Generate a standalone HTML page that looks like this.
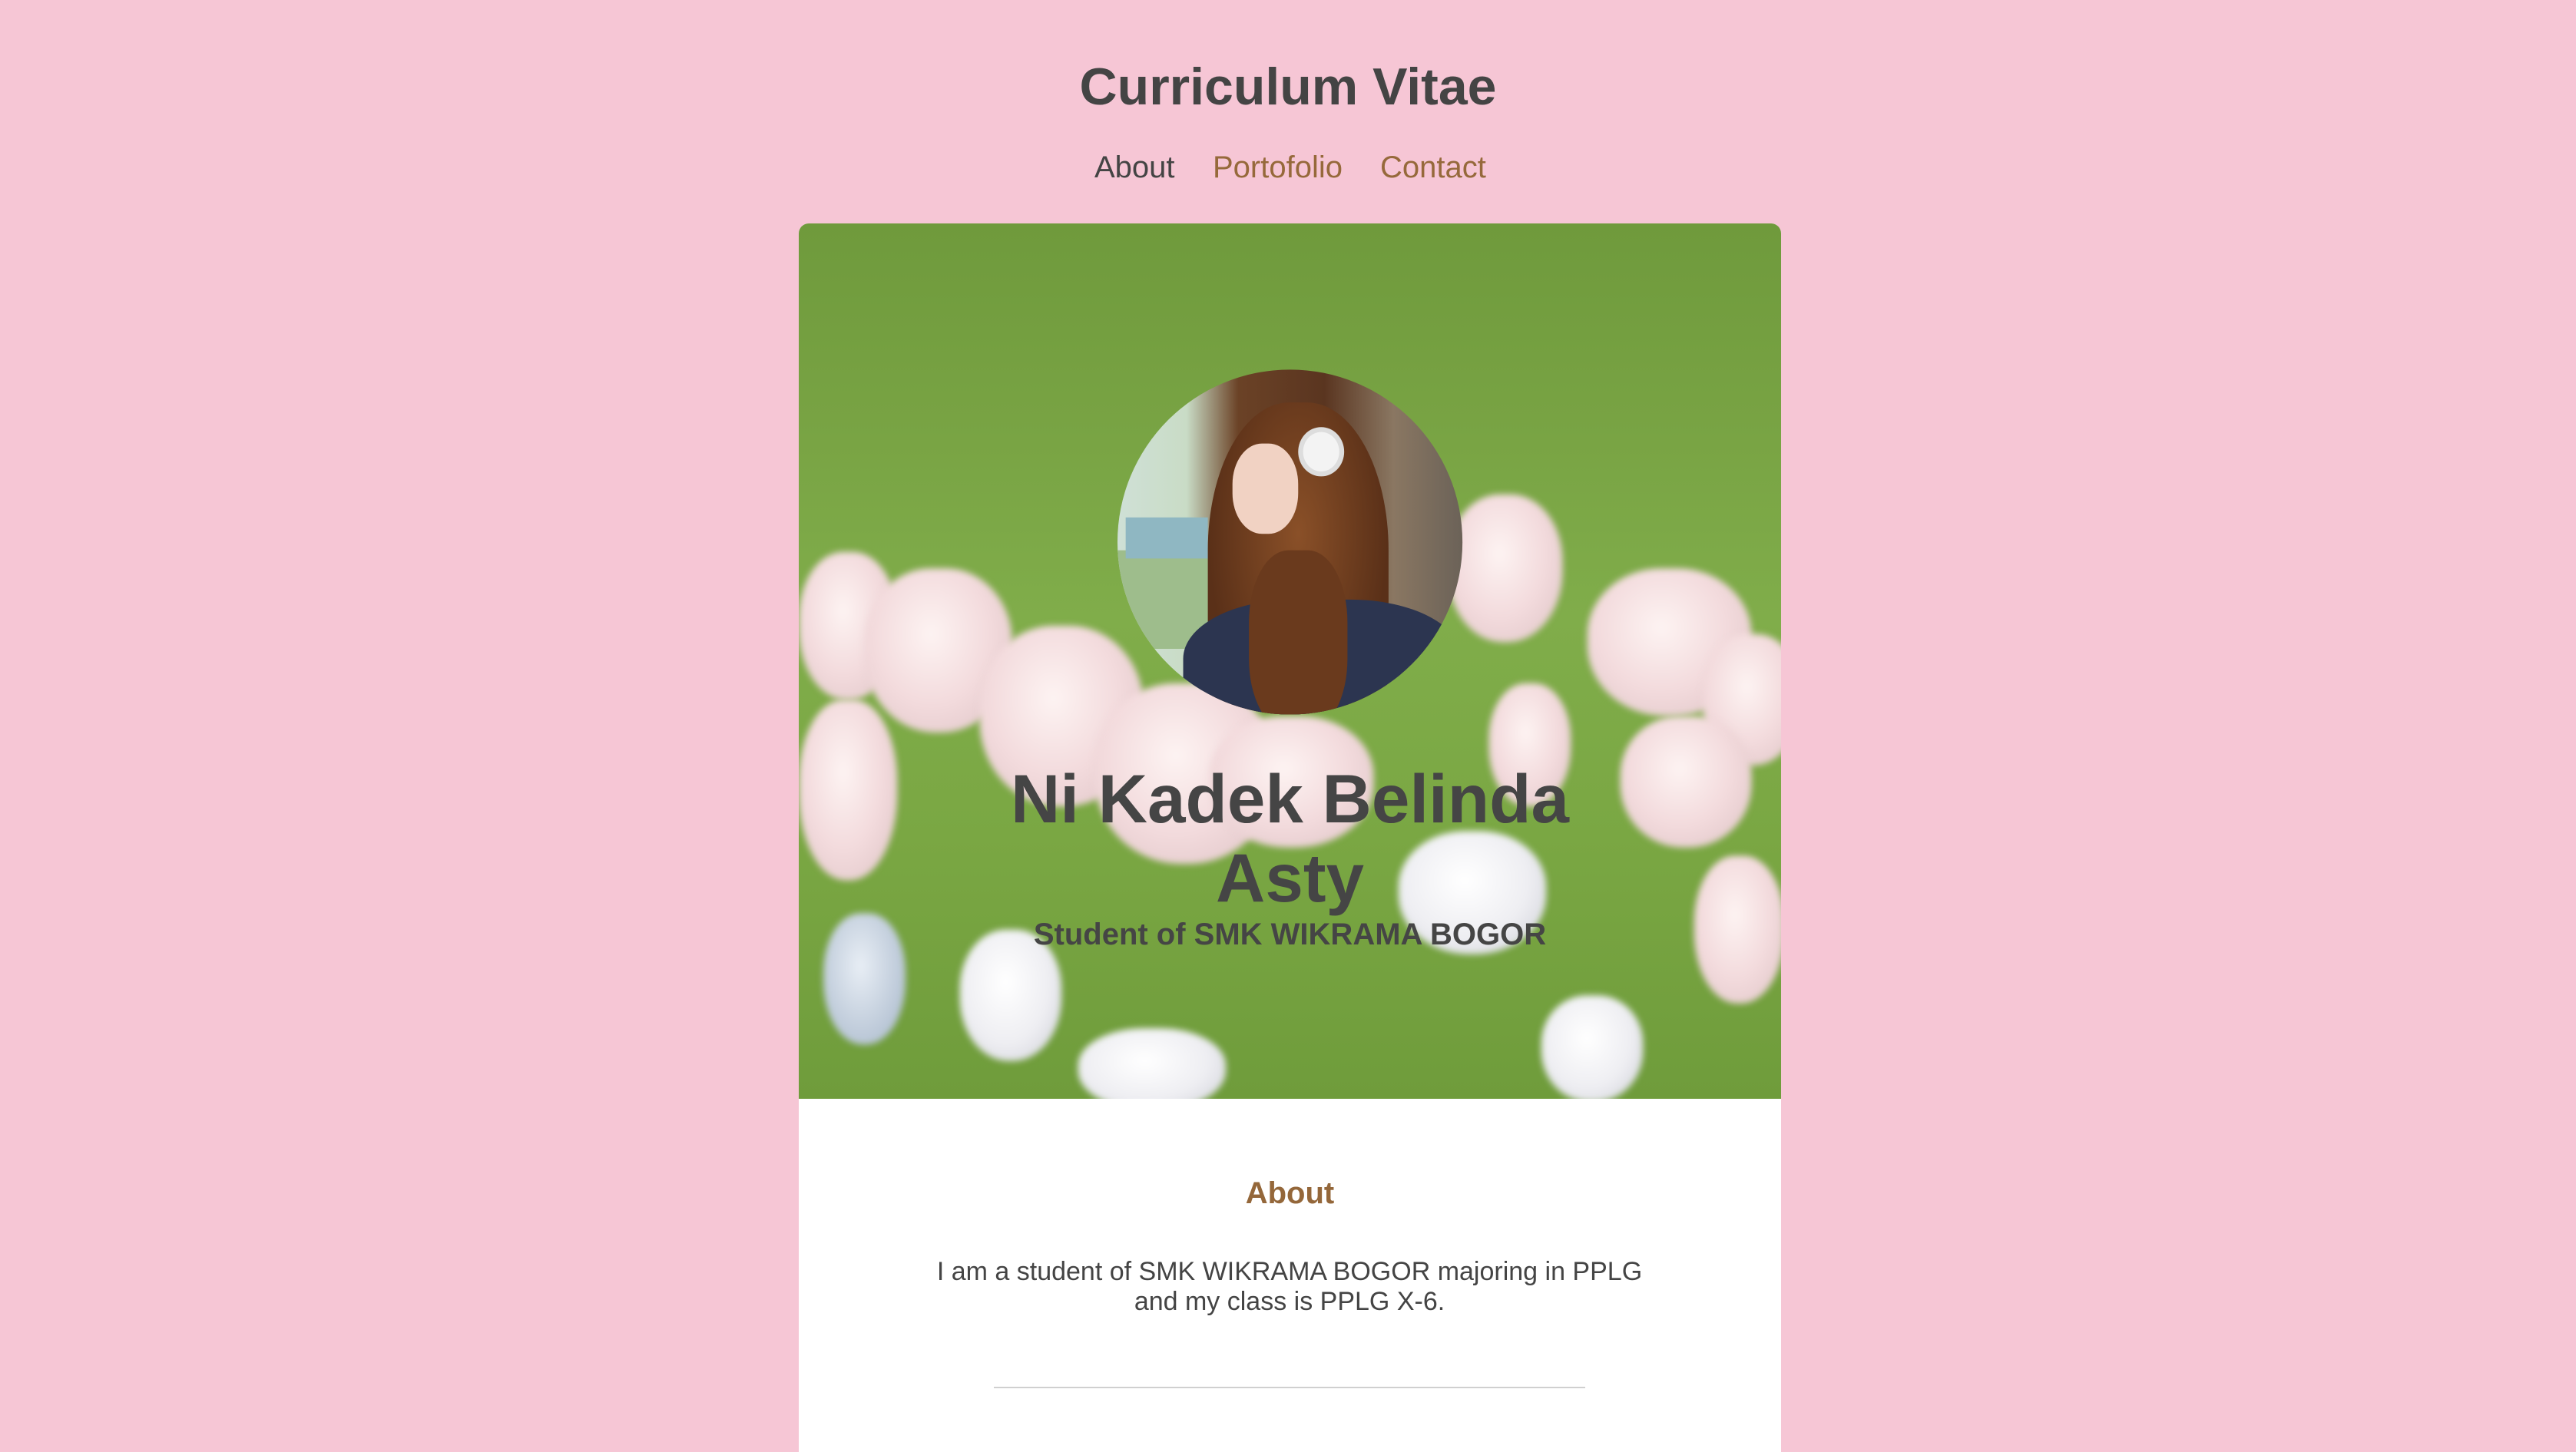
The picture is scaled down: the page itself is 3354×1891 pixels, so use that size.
<!DOCTYPE html>
<html><head><meta charset="utf-8"><style>
*{margin:0;padding:0;box-sizing:border-box}
body{width:3354px;height:1872px;background:#f6c6d5;font-family:"Liberation Sans",Arial,sans-serif;position:relative;overflow:hidden;color:#444}
.t{position:absolute;left:0;width:3354px;text-align:center;white-space:nowrap}
#title{top:73px;font-size:68px;font-weight:bold;line-height:80px}
.nav{position:absolute;top:194px;font-size:40px;line-height:48px}
#card{position:absolute;left:1040px;top:291px;width:1279px;height:1600px;background:#fff;border-radius:13px 13px 0 0;overflow:hidden}
#hero{position:absolute;left:0;top:0;width:1279px;height:1140px;overflow:hidden}
#sc{position:absolute;left:0;top:0;width:598px;height:533px;transform:scale(2.139);transform-origin:0 0;
background:linear-gradient(180deg,#6f9a3c 0%,#79a444 25%,#80ad4a 45%,#7aa743 70%,#6f9c3b 100%)}
.tl{position:absolute;border-radius:45% 45% 48% 48%;filter:blur(2px)}
.p{background:radial-gradient(ellipse at 45% 40%,#fdf3f2 0%,#f3dbdd 50%,#dcc2c4 100%)}
.w{background:radial-gradient(ellipse at 45% 40%,#ffffff 0%,#eeeef2 55%,#c9cad3 100%)}
.b{background:radial-gradient(ellipse at 45% 40%,#e8eef5 0%,#b9c6d6 70%,#9aa9bb 100%)}
#av{position:absolute;left:194px;top:89px;width:210px;height:210px;border-radius:50%;overflow:hidden;
background:linear-gradient(90deg,#cfe0d6 0%,#c9dcc6 20%,#6b4226 35%,#5a3520 60%,#8a7762 80%,#6b6258 100%)}
</style></head><body>
<div class="t" id="title">Curriculum Vitae</div>
<div class="nav" style="left:1425px;color:#444">About</div>
<div class="nav" style="left:1579px;color:#96693b">Portofolio</div>
<div class="nav" style="left:1797px;color:#96693b">Contact</div>
<div id="card">
<div id="hero"><div id="sc">
<div class="tl p" style="left:0;top:200px;width:60px;height:90px"></div>
<div class="tl p" style="left:40px;top:210px;width:90px;height:100px"></div>
<div class="tl p" style="left:0;top:290px;width:60px;height:110px"></div>
<div class="tl p" style="left:110px;top:245px;width:100px;height:110px"></div>
<div class="tl p" style="left:180px;top:280px;width:110px;height:110px"></div>
<div class="tl p" style="left:250px;top:300px;width:100px;height:80px"></div>
<div class="tl w" style="left:98px;top:430px;width:62px;height:80px"></div>
<div class="tl b" style="left:15px;top:420px;width:50px;height:80px"></div>
<div class="tl w" style="left:170px;top:490px;width:90px;height:50px"></div>
<div class="tl p" style="left:395px;top:165px;width:70px;height:90px"></div>
<div class="tl p" style="left:480px;top:210px;width:100px;height:90px"></div>
<div class="tl p" style="left:550px;top:250px;width:60px;height:80px"></div>
<div class="tl p" style="left:420px;top:280px;width:50px;height:75px"></div>
<div class="tl p" style="left:500px;top:300px;width:80px;height:80px"></div>
<div class="tl w" style="left:365px;top:370px;width:90px;height:75px"></div>
<div class="tl w" style="left:452px;top:470px;width:62px;height:65px"></div>
<div class="tl p" style="left:545px;top:385px;width:55px;height:90px"></div>
<div id="av">
<div style="position:absolute;left:0;top:110px;width:60px;height:60px;background:#9ebd8c"></div>
<div style="position:absolute;left:5px;top:90px;width:50px;height:25px;background:#8fb7c2"></div>
<div style="position:absolute;left:55px;top:20px;width:110px;height:200px;border-radius:45% 45% 20% 20%;background:radial-gradient(ellipse at 50% 40%,#8a5028,#5a3018 70%)"></div>
<div style="position:absolute;left:70px;top:45px;width:40px;height:55px;border-radius:45%;background:#f1d2c3"></div>
<div style="position:absolute;left:40px;top:140px;width:170px;height:90px;border-radius:40% 40% 0 0;background:#2c3550"></div>
<div style="position:absolute;left:80px;top:110px;width:60px;height:110px;border-radius:40%;background:#6a3a1d"></div>
<div style="position:absolute;left:110px;top:35px;width:28px;height:30px;border-radius:50%;background:#f3f3f3;border:3px solid #ddd"></div>
</div>
</div></div>
<div style="position:absolute;left:0;top:698px;width:1279px;text-align:center;font-size:89px;font-weight:bold;line-height:103px;color:#454545">Ni Kadek Belinda<br>Asty</div>
<div style="position:absolute;left:0;top:902px;width:1279px;text-align:center;font-size:40px;font-weight:bold;line-height:48px;color:#454545">Student of SMK WIKRAMA BOGOR</div>
<div style="position:absolute;left:0;top:1239px;width:1279px;text-align:center;font-size:40px;font-weight:bold;line-height:48px;color:#94673a">About</div>
<div style="position:absolute;left:169px;top:1346px;width:940px;text-align:center;font-size:34px;line-height:39px;color:#444">I am a student of SMK WIKRAMA BOGOR majoring in PPLG and my class is PPLG X-6.</div>
<div style="position:absolute;left:254px;top:1515px;width:770px;height:2px;background:#d0d0d0"></div>
</div>
</body></html>
